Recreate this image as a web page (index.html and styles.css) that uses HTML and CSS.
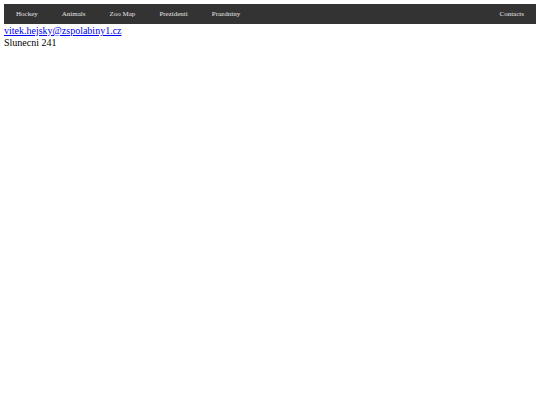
FILE: index.html
```html
<!DOCTYPE html>
<html>
<head>
<meta charset="utf-8">
<link rel="stylesheet" href="styles.css">
</head>
<body>
<ul class="nav">
  <li><a href="#">Hockey</a></li>
  <li><a href="#">Animals</a></li>
  <li><a href="#">Zoo Map</a></li>
  <li><a href="#">Prezidenti</a></li>
  <li><a href="#">Prazdniny</a></li>
  <li class="right"><a href="#">Contacts</a></li>
</ul>
<div class="info">
  <a href="#" class="mail">vitek.hejsky@zspolabiny1.cz</a><br>
  Slunecni 241
</div>
</body>
</html>
```
FILE: styles.css
```css
body {
  margin: 4px;
  font-family: "Liberation Serif", "Times New Roman", serif;
  font-size: 10px;
  color: #000;
  background: #fff;
}
.nav {
  list-style: none;
  margin: 0;
  padding: 0;
  display: flex;
  background: #333;
}
.nav li a {
  display: block;
  padding: 6px 12px;
  font-size: 7px;
  line-height: 8px;
  color: #e6e6e6;
  text-decoration: none;
}
.nav .right {
  margin-left: auto;
}
.info {
  line-height: 11.5px;
  padding-top: 1px;
}
.mail {
  color: #0000ee;
}
```
